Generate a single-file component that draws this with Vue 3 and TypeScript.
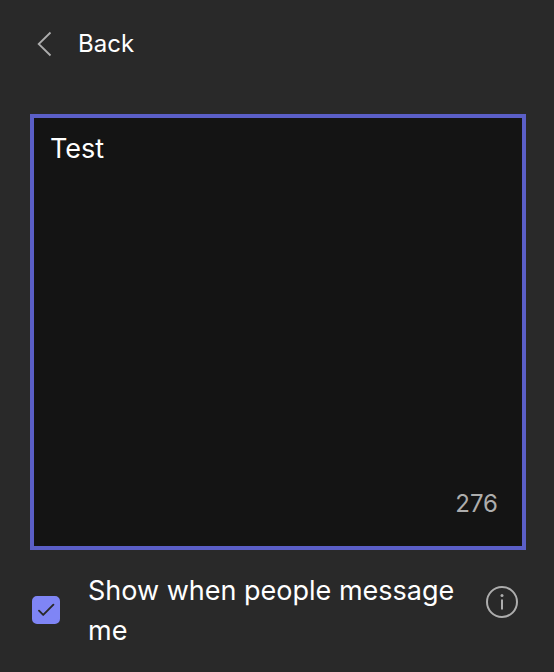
<script setup lang="ts">
import { computed, ref } from 'vue'

const LIMIT = 280
const message = ref<string>('Test')
const showMessage = ref<boolean>(true)
const remaining = computed<number>(() => LIMIT - message.value.length)
</script>

<template>
  <main class="panel">
    <button class="back" type="button">
      <svg class="chevron" viewBox="0 0 16 26" aria-hidden="true">
        <path d="M14.5 1.5 2.7 13l11.8 11.5" />
      </svg>
      <span>Back</span>
    </button>

    <div class="editor">
      <textarea v-model="message" class="message" aria-label="Status message" :maxlength="LIMIT" spellcheck="false"></textarea>
      <span class="count">{{ remaining }}</span>
    </div>

    <div class="option">
      <input id="show" v-model="showMessage" class="check" type="checkbox" />
      <label class="caption" for="show">Show when people message me</label>
      <button class="info" type="button" aria-label="More information">
        <svg viewBox="0 0 34 34" aria-hidden="true">
          <circle class="ring" cx="17" cy="17" r="15" />
          <path class="ring" d="M17 14.5V24.5" />
          <circle class="dot" cx="17" cy="10.5" r="1.5" />
        </svg>
      </button>
    </div>
  </main>
</template>

<style>
body {
  background: #292929;
}
</style>

<style scoped>
.panel {
  box-sizing: border-box;
  min-height: 100vh;
  padding: 28px 28px 21px 30px;
  display: flex;
  flex-direction: column;
  color: #fff;
  font-family: Inter, sans-serif;
}
.back {
  align-self: flex-start;
  display: flex;
  align-items: center;
  gap: 26px;
  padding: 0 0 0 6px;
  border: 0;
  background: none;
  color: inherit;
  font: 24px/32px Inter, sans-serif;
}
.chevron {
  width: 16px;
  height: 26px;
  fill: none;
  stroke: #adadad;
  stroke-width: 1.8;
}
.editor {
  box-sizing: border-box;
  margin-top: 54px;
  flex: 1;
  display: flex;
  flex-direction: column;
  border: 4px solid #5b5fc7;
  background: #141414;
}
.message {
  flex: 1;
  min-height: 120px;
  padding: 11px 16px;
  border: 0;
  outline: 0;
  resize: none;
  background: none;
  color: inherit;
  font: 27px/40px Inter, sans-serif;
}
.count {
  align-self: flex-end;
  padding: 0 24px 26px;
  color: #adadad;
  font-size: 24px;
  line-height: 32px;
}
.option {
  display: flex;
  align-items: flex-start;
  margin-top: 21px;
}
.check {
  appearance: none;
  flex: none;
  width: 28px;
  height: 28px;
  margin: 25px 28px 0 2px;
  border: 2px solid #7f85f5;
  border-radius: 5px;
}
.check:checked {
  background: #7f85f5 url("data:image/svg+xml,%3Csvg xmlns='http://www.w3.org/2000/svg' viewBox='0 0 24 24'%3E%3Cpath d='M5 12.7l4.2 4.2L19.4 6.7' fill='none' stroke='%23292929' stroke-width='1.9' stroke-linecap='round' stroke-linejoin='round'/%3E%3C/svg%3E") center / 24px no-repeat;
}
.caption {
  flex: 1;
  font-size: 27px;
  line-height: 40px;
}
.info {
  flex: none;
  width: 34px;
  height: 34px;
  margin: 14px 7px 0 12px;
  padding: 0;
  border: 0;
  background: none;
}
.info svg {
  display: block;
}
.ring {
  fill: none;
  stroke: #adadad;
  stroke-width: 2;
}
.dot {
  fill: #adadad;
}
</style>
